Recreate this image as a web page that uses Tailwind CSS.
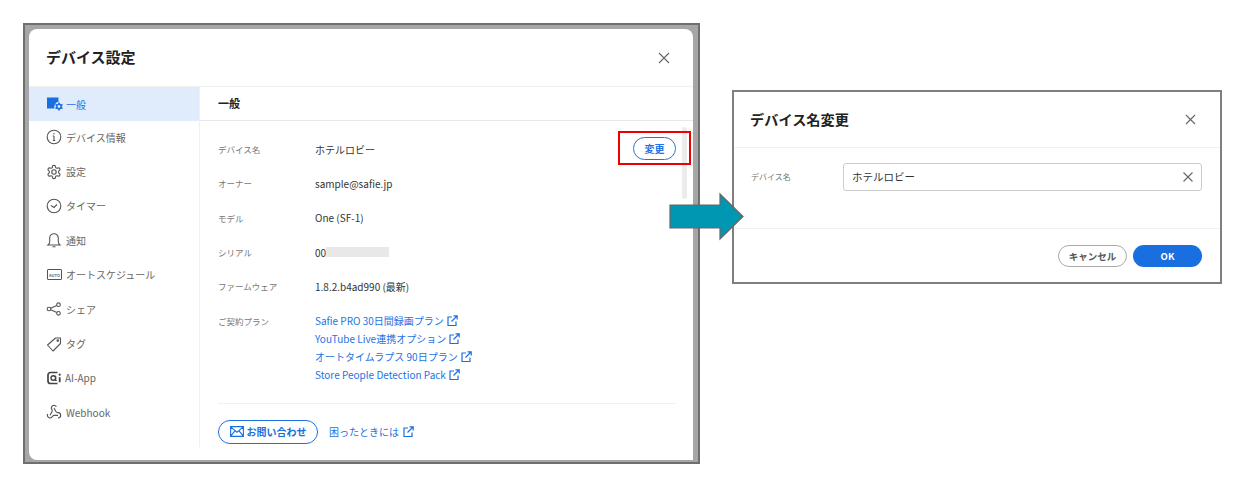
<!DOCTYPE html>
<html lang="ja">
<head>
    <meta charset="UTF-8">
    <title>デバイス設定</title>
    <script src="https://cdn.jsdelivr.net/npm/@tailwindcss/browser@4"></script>
</head>
<body class="bg-white font-['Noto_Sans_CJK_JP','Noto_Sans',sans-serif] text-[#333]">
<div class="relative w-[1248px] h-[480px] overflow-hidden">

    <!-- device settings window -->
    <div class="absolute left-[23px] top-[23px] w-[677px] h-[441px] border-2 border-[#6f6f6f] bg-[#a6a6a6] pt-[4px] pl-[4px]">
        <div class="w-[664px] h-[431px] bg-white rounded-t-[8px] rounded-bl-[8px] flex flex-col overflow-hidden">
            <div class="h-[58px] shrink-0 flex items-center justify-between pl-[17px] pr-[22px] border-b border-[#f0f0f0]">
                <h1 class="text-[15px] font-bold text-[#222]">デバイス設定</h1>
                <svg class="w-[14px] h-[14px]" viewBox="0 0 14 14" fill="none" stroke="#666" stroke-width="1.1"><path d="M2 2l10 10M12 2L2 12"/></svg>
            </div>
            <div class="flex flex-1 min-h-0">
                <nav class="w-[171px] h-[360px] shrink-0 border-r border-[#f0f0f0] text-[10px] text-[#666]">
                    <a class="h-[34px] flex items-center gap-[3px] pl-[17px] bg-[#e0ecfc] text-[#2273e2]">
                        <svg class="w-[17px] h-[16px]" viewBox="0 0 17 16"><path d="M1 1.500h11.500v4.300a5.200 5.200 0 0 0-4 6.700H1z" fill="#1a6fe0"/><circle cx="13" cy="10.500" r="2.200" fill="none" stroke="#1a6fe0" stroke-width="1.500"/><path d="M13 6.500v1.700M13 12.800v1.700M9.500 8.500l1.500.9M15 11.600l1.500.9M9.500 12.500l1.500-.9M15 9.400l1.500-.9" stroke="#1a6fe0" stroke-width="1.500"/></svg>
                        一般
                    </a>
                    <a class="h-[34.400px] pb-[2px] flex items-center gap-[3px] pl-[17px]">
                        <svg class="w-[16px] h-[16px] mr-[1px]" viewBox="0 0 16 16" fill="none" stroke="#555" stroke-width="1.100"><circle cx="8" cy="8" r="6.800"/><path d="M8 7v4.500M6.800 7H8M6.800 11.500h2.400" /><circle cx="8" cy="4.800" r=".7" fill="#555" stroke="none"/></svg>
                        デバイス情報
                    </a>
                    <a class="h-[34.400px] pb-[2px] flex items-center gap-[3px] pl-[17px]">
                        <svg class="w-[16px] h-[16px] mr-[1px]" viewBox="0 0 24 24" fill="none" stroke="#555" stroke-width="1.700"><path d="M12.220 2h-.44a2 2 0 0 0-2 2v.18a2 2 0 0 1-1 1.730l-.43.250a2 2 0 0 1-2 0l-.15-.08a2 2 0 0 0-2.730.730l-.22.380a2 2 0 0 0 .730 2.730l.15.100a2 2 0 0 1 1 1.720v.510a2 2 0 0 1-1 1.740l-.15.090a2 2 0 0 0-.730 2.730l.22.380a2 2 0 0 0 2.730.730l.15-.08a2 2 0 0 1 2 0l.43.250a2 2 0 0 1 1 1.730V20a2 2 0 0 0 2 2h.44a2 2 0 0 0 2-2v-.18a2 2 0 0 1 1-1.730l.43-.25a2 2 0 0 1 2 0l.15.080a2 2 0 0 0 2.730-.730l.22-.39a2 2 0 0 0-.730-2.730l-.15-.08a2 2 0 0 1-1-1.740v-.5a2 2 0 0 1 1-1.740l.15-.09a2 2 0 0 0 .730-2.730l-.22-.38a2 2 0 0 0-2.730-.730l-.15.080a2 2 0 0 1-2 0l-.43-.25a2 2 0 0 1-1-1.730V4a2 2 0 0 0-2-2z"/><circle cx="12" cy="12" r="3.300"/></svg>
                        設定
                    </a>
                    <a class="h-[34.400px] pb-[2px] flex items-center gap-[3px] pl-[17px]">
                        <svg class="w-[16px] h-[16px] mr-[1px]" viewBox="0 0 16 16" fill="none" stroke="#555" stroke-width="1.100"><circle cx="8" cy="8" r="6.800"/><path d="M5 7.500l3 2 3-3"/></svg>
                        タイマー
                    </a>
                    <a class="h-[34.400px] pb-[2px] flex items-center gap-[3px] pl-[17px]">
                        <svg class="w-[16px] h-[16px] mr-[1px]" viewBox="0 0 16 16" fill="none" stroke="#555" stroke-width="1.100"><path d="M2 13h12c-1.200-1-1.700-2-1.700-3.500V6a4.300 4.300 0 0 0-8.600 0v3.500C3.700 11 3.200 12 2 13zM6.500 14.800h3"/></svg>
                        通知
                    </a>
                    <a class="h-[34.400px] pb-[2px] flex items-center gap-[3px] pl-[17px]">
                        <span class="w-[15px] h-[11px] ml-[1px] mr-[1px] border border-[#555] rounded-[1px] flex items-center justify-center text-[4px] leading-none font-bold">AUTO</span>
                        オートスケジュール
                    </a>
                    <a class="h-[34.400px] pb-[2px] flex items-center gap-[3px] pl-[17px]">
                        <svg class="w-[16px] h-[16px] mr-[1px]" viewBox="0 0 16 16" fill="none" stroke="#555" stroke-width="1.100"><circle cx="3" cy="8" r="1.800"/><circle cx="12.500" cy="3.700" r="1.800"/><circle cx="12.500" cy="12.300" r="1.800"/><path d="M4.700 7.200l6.100-2.800M4.700 8.800l6.100 2.800"/></svg>
                        シェア
                    </a>
                    <a class="h-[34.400px] pb-[2px] flex items-center gap-[3px] pl-[17px]">
                        <svg class="w-[16px] h-[16px] mr-[1px]" viewBox="0 0 16 16" fill="none" stroke="#555" stroke-width="1.100"><path d="M1.500 9L9.500 2h5v5.500l-7.500 7.500z" stroke-linejoin="round"/><circle cx="11.800" cy="4.600" r=".8"/></svg>
                        タグ
                    </a>
                    <a class="h-[34.400px] pb-[2px] flex items-center gap-[2px] pl-[17px]">
                        <svg class="w-[16px] h-[16px] mr-[1px]" viewBox="0 0 16 16" fill="none" stroke="#444"><path d="M11.500 2.500H4.500a2.500 2.500 0 0 0-2.500 2.500v6a2.500 2.500 0 0 0 2.500 2.500h7" stroke-width="1.700"/><circle cx="7.300" cy="8" r="2.300" stroke-width="1.400"/><path d="M9.600 5.700v4.800h1.200" stroke-width="1.200"/><path d="M13.700 7.200v5" stroke-width="1.800"/><circle cx="13.700" cy="4.700" r="1.100" fill="#444" stroke="none"/></svg>
                        AI-App
                    </a>
                    <a class="h-[34.400px] pb-[2px] flex items-center gap-[3px] pl-[17px]">
                        <svg class="w-[16px] h-[16px] mr-[1px]" viewBox="0 0 24 24" fill="none" stroke="#555" stroke-width="1.700"><path d="M18 16.980h-5.990c-1.100 0-1.950.940-2.480 1.900A4 4 0 0 1 2 17c.010-.7.200-1.400.570-2"/><path d="M6 17l3.130-5.780c.530-.970.100-2.180-.5-3.100a4 4 0 1 1 6.890-4.060"/><path d="M12 6l3.130 5.730C15.660 12.700 16.900 13 18 13a4 4 0 0 1 0 8"/></svg>
                        Webhook
                    </a>
                </nav>
                <main class="relative flex-1 min-w-0">
                    <div class="h-[34px] flex items-center pl-[18px] border-b border-[#e8e8e8] text-[11px] font-bold text-[#222]">一般</div>
                    <div class="pl-[18px] pr-[17px] pt-[11px] text-[10px]">
                        <div class="h-[34.400px] flex items-center">
                            <span class="w-[97px] text-[8.500px] text-[#777]">デバイス名</span>
                            <span>ホテルロビー</span>
                        </div>
                        <div class="h-[34.400px] flex items-center">
                            <span class="w-[97px] text-[8.500px] text-[#777]">オーナー</span>
                            <span>sample@safie.jp</span>
                        </div>
                        <div class="h-[34.400px] flex items-center">
                            <span class="w-[97px] text-[8.500px] text-[#777]">モデル</span>
                            <span>One (SF-1)</span>
                        </div>
                        <div class="h-[34.400px] flex items-center">
                            <span class="w-[97px] text-[8.500px] text-[#777]">シリアル</span>
                            <span>00</span>
                            <span class="w-[63px] h-[10px] bg-[#e8e8e8]"></span>
                        </div>
                        <div class="h-[34.400px] flex items-center">
                            <span class="w-[97px] text-[8.500px] text-[#777]">ファームウェア</span>
                            <span>1.8.2.b4ad990 (最新)</span>
                        </div>
                        <div class="flex pt-[8px] pb-[19px] border-b border-[#f0f0f0]">
                            <span class="w-[97px] h-[18px] flex items-center text-[8.500px] text-[#777]">ご契約プラン</span>
                            <div class="text-[#2273e2]">
                                <a class="h-[18px] flex items-center gap-[3px]">Safie PRO 30日間録画プラン
                                    <svg class="w-[11px] h-[11px]" viewBox="0 0 11 11" fill="none" stroke="#1a6fe0" stroke-width="1.200"><path d="M5 2H1v8.500h8V6.500M6.500 .8h3.700v3.700M10 1L4.500 6.500"/></svg>
                                </a>
                                <a class="h-[18px] flex items-center gap-[3px]">YouTube Live連携オプション
                                    <svg class="w-[11px] h-[11px]" viewBox="0 0 11 11" fill="none" stroke="#1a6fe0" stroke-width="1.200"><path d="M5 2H1v8.500h8V6.500M6.500 .8h3.700v3.700M10 1L4.500 6.500"/></svg>
                                </a>
                                <a class="h-[18px] flex items-center gap-[3px]">オートタイムラプス 90日プラン
                                    <svg class="w-[11px] h-[11px]" viewBox="0 0 11 11" fill="none" stroke="#1a6fe0" stroke-width="1.200"><path d="M5 2H1v8.500h8V6.500M6.500 .8h3.700v3.700M10 1L4.500 6.500"/></svg>
                                </a>
                                <a class="h-[18px] flex items-center gap-[3px]">Store People Detection Pack
                                    <svg class="w-[11px] h-[11px]" viewBox="0 0 11 11" fill="none" stroke="#1a6fe0" stroke-width="1.200"><path d="M5 2H1v8.500h8V6.500M6.500 .8h3.700v3.700M10 1L4.500 6.500"/></svg>
                                </a>
                            </div>
                        </div>
                        <div class="flex items-center gap-[11px] pt-[16px]">
                            <button class="w-[100px] h-[24px] rounded-full border-[1.500px] border-[#1a6fe0] text-[#1a6fe0] font-bold flex items-center justify-center gap-[3px]">
                                <svg class="w-[14px] h-[11px]" viewBox="0 0 14 11" fill="none" stroke="#1a6fe0" stroke-width="1.100"><path d="M.6.6h12.800v9.800H.6zM.6.8L7 6.200 13.400.8M.6 10.200L5 4.800M13.400 10.200L9 4.800"/></svg>
                                お問い合わせ
                            </button>
                            <a class="flex items-center gap-[4px] text-[#2273e2]">困ったときには
                                <svg class="w-[11px] h-[11px]" viewBox="0 0 11 11" fill="none" stroke="#1a6fe0" stroke-width="1.200"><path d="M5 2H1v8.500h8V6.500M6.500 .8h3.700v3.700M10 1L4.500 6.500"/></svg>
                            </a>
                        </div>
                    </div>
                    <!-- scrollbar -->
                    <div class="absolute left-[482px] top-[40px] w-[5px] h-[72px] rounded-full bg-[#ececec]"></div>
                </main>
            </div>
        </div>
    </div>

    <!-- highlighted change button -->
    <div class="absolute left-[618px] top-[131px] w-[73px] h-[34px] border-2 border-[#ee0000] flex items-center justify-center">
        <button class="w-[43px] h-[23px] rounded-full border-[1.500px] border-[#2273e2] bg-white text-[10px] font-bold text-[#2273e2]">変更</button>
    </div>

    <!-- rename dialog -->
    <div class="absolute left-[732px] top-[90px] w-[490px] h-[194px] border-2 border-[#7f7f7f] bg-white flex flex-col">
        <div class="h-[56px] shrink-0 flex items-center justify-between pl-[16px] pr-[23px] border-b border-[#f0f0f0]">
            <h2 class="text-[14.200px] font-bold text-[#222]">デバイス名変更</h2>
            <svg class="w-[13px] h-[13px]" viewBox="0 0 13 13" fill="none" stroke="#666" stroke-width="1.100"><path d="M2 2l9 9M11 2l-9 9"/></svg>
        </div>
        <div class="h-[81px] shrink-0 flex pt-[15px] pl-[17px] border-b border-[#f0f0f0]">
            <span class="w-[92px] h-[28px] flex items-center text-[8px] text-[#777]">デバイス名</span>
            <div class="w-[359px] h-[28px] border border-[#ccc] rounded-[3px] flex items-center justify-between pl-[8px] pr-[7px] text-[10.500px]">
                ホテルロビー
                <svg class="w-[12px] h-[12px]" viewBox="0 0 12 12" fill="none" stroke="#666" stroke-width="1.100"><path d="M1.500 1.500l9 9M10.500 1.500l-9 9"/></svg>
            </div>
        </div>
        <div class="flex justify-end gap-[6px] pt-[16px] pr-[18px] text-[9.500px] font-bold">
            <button class="w-[69px] h-[22px] rounded-full border-[1.500px] border-[#aaa] text-[#555]">キャンセル</button>
            <button class="w-[69px] h-[22px] rounded-full bg-[#1a6fe0] text-white">OK</button>
        </div>
    </div>

    <!-- arrow between the two windows -->
    <svg class="absolute left-[668px] top-[192px] w-[78px] h-[49px]" viewBox="0 0 78 49"><path d="M2 13h50V2l23 22.500L52 47V36H2z" fill="#0097b2" stroke="#666" stroke-width="1.200"/></svg>
</div>
</body>
</html>
